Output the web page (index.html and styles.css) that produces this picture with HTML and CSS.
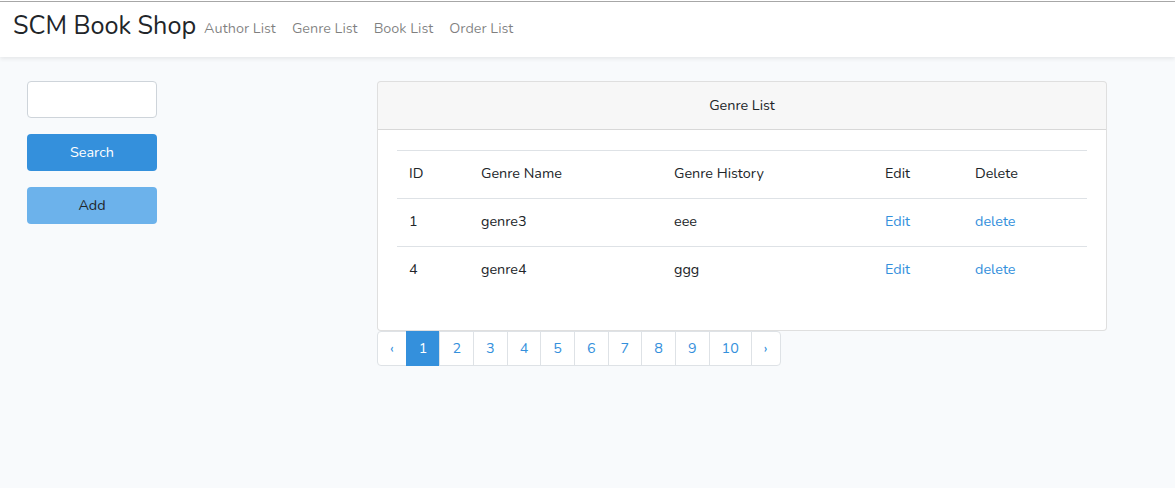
FILE: index.html
```html
<!DOCTYPE html>
<html>
<head>
<meta charset="utf-8">
<link rel="stylesheet" href="styles.css">
</head>
<body>
<div class="topline"></div>
<nav class="navbar">
  <a class="brand" href="#">SCM Book Shop</a>
  <ul class="nav">
    <li><a href="#">Author List</a></li>
    <li><a href="#">Genre List</a></li>
    <li><a href="#">Book List</a></li>
    <li><a href="#">Order List</a></li>
  </ul>
</nav>
<main class="main">
  <aside class="side">
    <input class="search-input" type="text">
    <button class="btn btn-primary">Search</button>
    <button class="btn btn-info">Add</button>
  </aside>
  <section class="content">
    <div class="card">
      <div class="card-header">Genre List</div>
      <div class="card-body">
        <table class="table">
          <colgroup>
            <col class="c1"><col class="c2"><col class="c3"><col class="c4"><col class="c5">
          </colgroup>
          <thead>
            <tr><th>ID</th><th>Genre Name</th><th>Genre History</th><th>Edit</th><th>Delete</th></tr>
          </thead>
          <tbody>
            <tr><td>1</td><td>genre3</td><td>eee</td><td><a href="#">Edit</a></td><td><a href="#">delete</a></td></tr>
            <tr><td>4</td><td>genre4</td><td>ggg</td><td><a href="#">Edit</a></td><td><a href="#">delete</a></td></tr>
          </tbody>
        </table>
      </div>
    </div>
    <ul class="pagination">
      <li class="page arrow"><a href="#">‹</a></li>
      <li class="page active"><a href="#">1</a></li>
      <li class="page"><a href="#">2</a></li>
      <li class="page"><a href="#">3</a></li>
      <li class="page"><a href="#">4</a></li>
      <li class="page"><a href="#">5</a></li>
      <li class="page"><a href="#">6</a></li>
      <li class="page"><a href="#">7</a></li>
      <li class="page"><a href="#">8</a></li>
      <li class="page"><a href="#">9</a></li>
      <li class="page"><a href="#">10</a></li>
      <li class="page arrow"><a href="#">›</a></li>
    </ul>
  </section>
</main>
</body>
</html>
```
FILE: styles.css
```css
* { box-sizing: border-box; }
html, body { margin: 0; padding: 0; }
body {
  background: #f8fafc;
  color: #212529;
  font-family: "Nunito", "Lato", "Noto Sans", sans-serif;
  font-size: 14.4px;
  line-height: 1.6;
}
a { text-decoration: none; color: #3490dc; }
.topline { height: 2px; border-bottom: 1px solid #a9a9a9; background: #fff; }
.navbar {
  background: #fff;
  height: 55px;
  display: flex;
  align-items: center;
  padding: 0 13px;
  box-shadow: 0 2px 4px rgba(0,0,0,.075);
}
.brand {
  color: #212529;
  font-size: 25.2px;
  line-height: 1;
  padding-bottom: 6px;
}
.nav { list-style: none; display: flex; margin: 0 0 0 8px; padding: 0 0 2px 0; }
.nav li a {
  color: rgba(0,0,0,.5);
  padding: 0 8px;
  font-size: 14.4px;
  display: block;
}
.nav li:first-child a { padding-left: 0; }
.main { display: flex; padding-top: 24px; }
.side {
  width: 130px;
  margin-left: 27px;
  display: flex;
  flex-direction: column;
}
.search-input {
  height: 37px;
  border: 1px solid #ced4da;
  border-radius: 4px;
  background: #fff;
  margin: 0 0 16px 0;
  font: inherit;
  padding: 6px 12px;
}
.btn {
  height: 37px;
  border: none;
  border-radius: 4px;
  font: inherit;
  cursor: pointer;
  margin-bottom: 16px;
}
.btn-primary { background: #3490dc; color: #fff; }
.btn-info { background: #6cb2eb; color: #212529; }
.content { margin-left: 220px; width: 730px; }
.card {
  background: #fff;
  border: 1px solid rgba(0,0,0,.125);
  border-radius: 4px;
  overflow: hidden;
}
.card-header {
  background: rgba(0,0,0,.03);
  border-bottom: 1px solid rgba(0,0,0,.125);
  height: 48px;
  display: flex;
  align-items: center;
  justify-content: center;
}
.card-body { padding: 20px 19px 35px 19px; }
.table { width: 100%; border-collapse: collapse; table-layout: fixed; }
.c1 { width: 72px; }
.c2 { width: 193px; }
.c3 { width: 211px; }
.c4 { width: 90px; }
.c5 { width: auto; }
.table th, .table td {
  text-align: left;
  font-weight: 400;
  padding: 11px 12px 13px 12px;
  height: 48px;
  border-top: 1px solid #dee2e6;
}
.table thead th { border-bottom: 1px solid #dee2e6; border-top: 1px solid #dee2e6; }
.pagination { list-style: none; display: flex; margin: 0; padding: 0; }
.page a {
  display: block;
  height: 35px;
  line-height: 33px;
  padding: 0 12px;
  border: 1px solid #dee2e6;
  margin-left: -1px;
  background: #fff;
  color: #3490dc;
  text-align: center;
}
.page:first-child a { margin-left: 0; border-radius: 4px 0 0 4px; }
.page:last-child a { border-radius: 0 4px 4px 0; }
.page.active a { background: #3490dc; border-color: #3490dc; color: #fff; }
.page.arrow a { padding: 0 12px; }
```
